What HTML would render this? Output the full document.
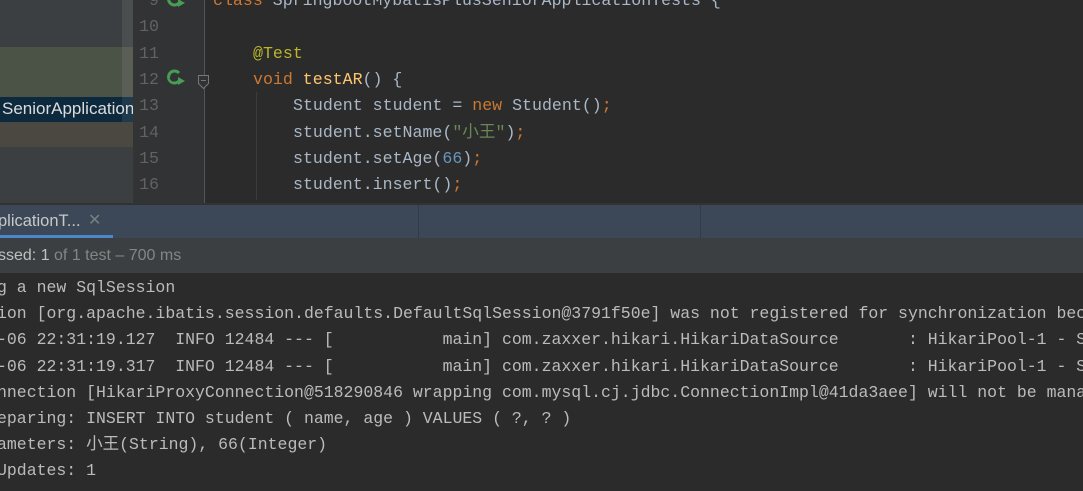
<!DOCTYPE html>
<html><head><meta charset="utf-8"><style>
*{margin:0;padding:0;box-sizing:border-box}
html,body{width:1083px;height:491px;overflow:hidden}
body{background:#2b2b2b;position:relative;font-family:"Liberation Mono","Noto Sans CJK SC",monospace}
.a{position:absolute}
.mono{font-family:"Liberation Mono","Noto Sans CJK SC",monospace;font-size:16.6px;white-space:pre;line-height:26.2px}
.sans{font-family:"Liberation Sans","Noto Sans CJK SC",sans-serif;white-space:pre}
.k{color:#cc7832}.an{color:#bbb529}.m{color:#ffc66d}.t{color:#a9b7c6}.n{color:#6897bb}.s{color:#6a8759}
.ln{color:#606366;text-align:right;width:28px;left:131px}
</style></head><body>
<div class="a" style="left:0;top:0;width:1083px;height:491px;overflow:hidden">
<div class="a" style="left:0;top:0;width:133px;height:204px;background:#3c3f41"></div>
<div class="a" style="left:0;top:47px;width:133px;height:50px;background:#4b5246"></div>
<div class="a" style="left:0;top:97px;width:133px;height:25px;background:#0d293e"></div>
<div class="a" style="left:0;top:122px;width:133px;height:25px;background:#4a4840"></div>
<div class="a" style="left:122px;top:0;width:11px;height:122px;background:rgba(255,255,255,0.08)"></div>
<div class="a" style="left:0;top:97px;width:133px;height:25px;overflow:hidden"><div class="a sans" style="left:2px;top:2px;font-size:17px;color:#dcdcdc;line-height:20px">SeniorApplication</div></div>
<div class="a" style="left:133px;top:0;width:71px;height:204px;background:#313335"></div>
<div class="a" style="left:204px;top:0;width:1px;height:204px;background:#555"></div>
<div class="a" style="left:256px;top:92px;width:1px;height:108px;background:#3b3b3b"></div>
<div class="a mono ln" style="top:-12px">9</div>
<div class="a mono ln" style="top:14px">10</div>
<div class="a mono ln" style="top:41px">11</div>
<div class="a mono ln" style="top:67px">12</div>
<div class="a mono ln" style="top:93px">13</div>
<div class="a mono ln" style="top:120px">14</div>
<div class="a mono ln" style="top:146px">15</div>
<div class="a mono ln" style="top:172px">16</div>
<svg class="a" style="left:166px;top:-9px" width="22" height="20" viewBox="0 0 22 20"><path d="M13 4a6 6 0 1 0 0 8" stroke="#499c54" stroke-width="3" fill="none"/><path d="M12 8l7 4-7 4z" fill="#499c54"/></svg>
<svg class="a" style="left:166px;top:69px" width="22" height="20" viewBox="0 0 22 20"><path d="M13 4a6 6 0 1 0 0 8" stroke="#499c54" stroke-width="3" fill="none"/><path d="M4 9l2.5 2.5L10 7" stroke="#313335" stroke-width="1.6" fill="none"/><path d="M12 8l7 4-7 4z" fill="#499c54"/></svg>
<svg class="a" style="left:197px;top:74px" width="14" height="16" viewBox="0 0 14 16"><path d="M1.5 1.5h10v8l-5 5-5-5z" stroke="#777" fill="#313335"/><path d="M4 6.5h5" stroke="#777"/></svg>
<div class="a mono" style="left:213px;top:-12px"><span class="k">class</span><span class="t"> SpringbootMybatisPlusSeniorApplicationTests {</span></div>
<div class="a mono" style="left:253px;top:41px"><span class="an">@Test</span></div>
<div class="a mono" style="left:253px;top:67px"><span class="k">void </span><span class="m">testAR</span><span class="t">() {</span></div>
<div class="a mono" style="left:293px;top:93px"><span class="t">Student student = </span><span class="k">new </span><span class="t">Student()</span><span class="k">;</span></div>
<div class="a mono" style="left:293px;top:120px"><span class="t">student.setName(</span><span class="s">"小王"</span><span class="t">)</span><span class="k">;</span></div>
<div class="a mono" style="left:293px;top:146px"><span class="t">student.setAge(</span><span class="n">66</span><span class="t">)</span><span class="k">;</span></div>
<div class="a mono" style="left:293px;top:172px"><span class="t">student.insert()</span><span class="k">;</span></div>
<div class="a" style="left:0;top:203px;width:1083px;height:2px;background:#323232"></div>
<div class="a" style="left:0;top:205px;width:1083px;height:33px;background:#3c4857"></div>
<div class="a" style="left:43px;top:205px;width:1px;height:33px;background:#353b44"></div>
<div class="a" style="left:418px;top:205px;width:1px;height:33px;background:#353b44"></div>
<div class="a" style="left:700px;top:205px;width:1px;height:33px;background:#353b44"></div>
<div class="a" style="left:0;top:205px;width:113px;height:33px;background:#3c4857"></div>
<div class="a sans" style="left:-2px;top:212px;font-size:16.5px;color:#c8c8c8;line-height:19px">plicationT...</div>
<div class="a sans" style="left:88px;top:211px;font-size:16px;color:#7a7f85;line-height:20px">✕</div>
<div class="a" style="left:0;top:235px;width:113px;height:3px;background:#4a88c7"></div>
<div class="a" style="left:0;top:238px;width:1083px;height:35px;background:#3c3f41"></div>
<div class="a sans" style="left:-2px;top:246px;font-size:16px;line-height:19px"><span style="color:#c0c0c0">ssed: 1 </span><span style="color:#858585">of 1 test – 700 ms</span></div>
<div class="a mono" style="left:-3px;top:275px;color:#bbbbbb;font-size:16.5px">g a new SqlSession
ion [org.apache.ibatis.session.defaults.DefaultSqlSession@3791f50e] was not registered for synchronization because
-06 22:31:19.127  INFO 12484 --- [           main] com.zaxxer.hikari.HikariDataSource       : HikariPool-1 - Starting...
-06 22:31:19.317  INFO 12484 --- [           main] com.zaxxer.hikari.HikariDataSource       : HikariPool-1 - Start completed.
nnection [HikariProxyConnection@518290846 wrapping com.mysql.cj.jdbc.ConnectionImpl@41da3aee] will not be managed
eparing: INSERT INTO student ( name, age ) VALUES ( ?, ? )
ameters: 小王(String), 66(Integer)
Updates: 1</div>
</div>
</body></html>
